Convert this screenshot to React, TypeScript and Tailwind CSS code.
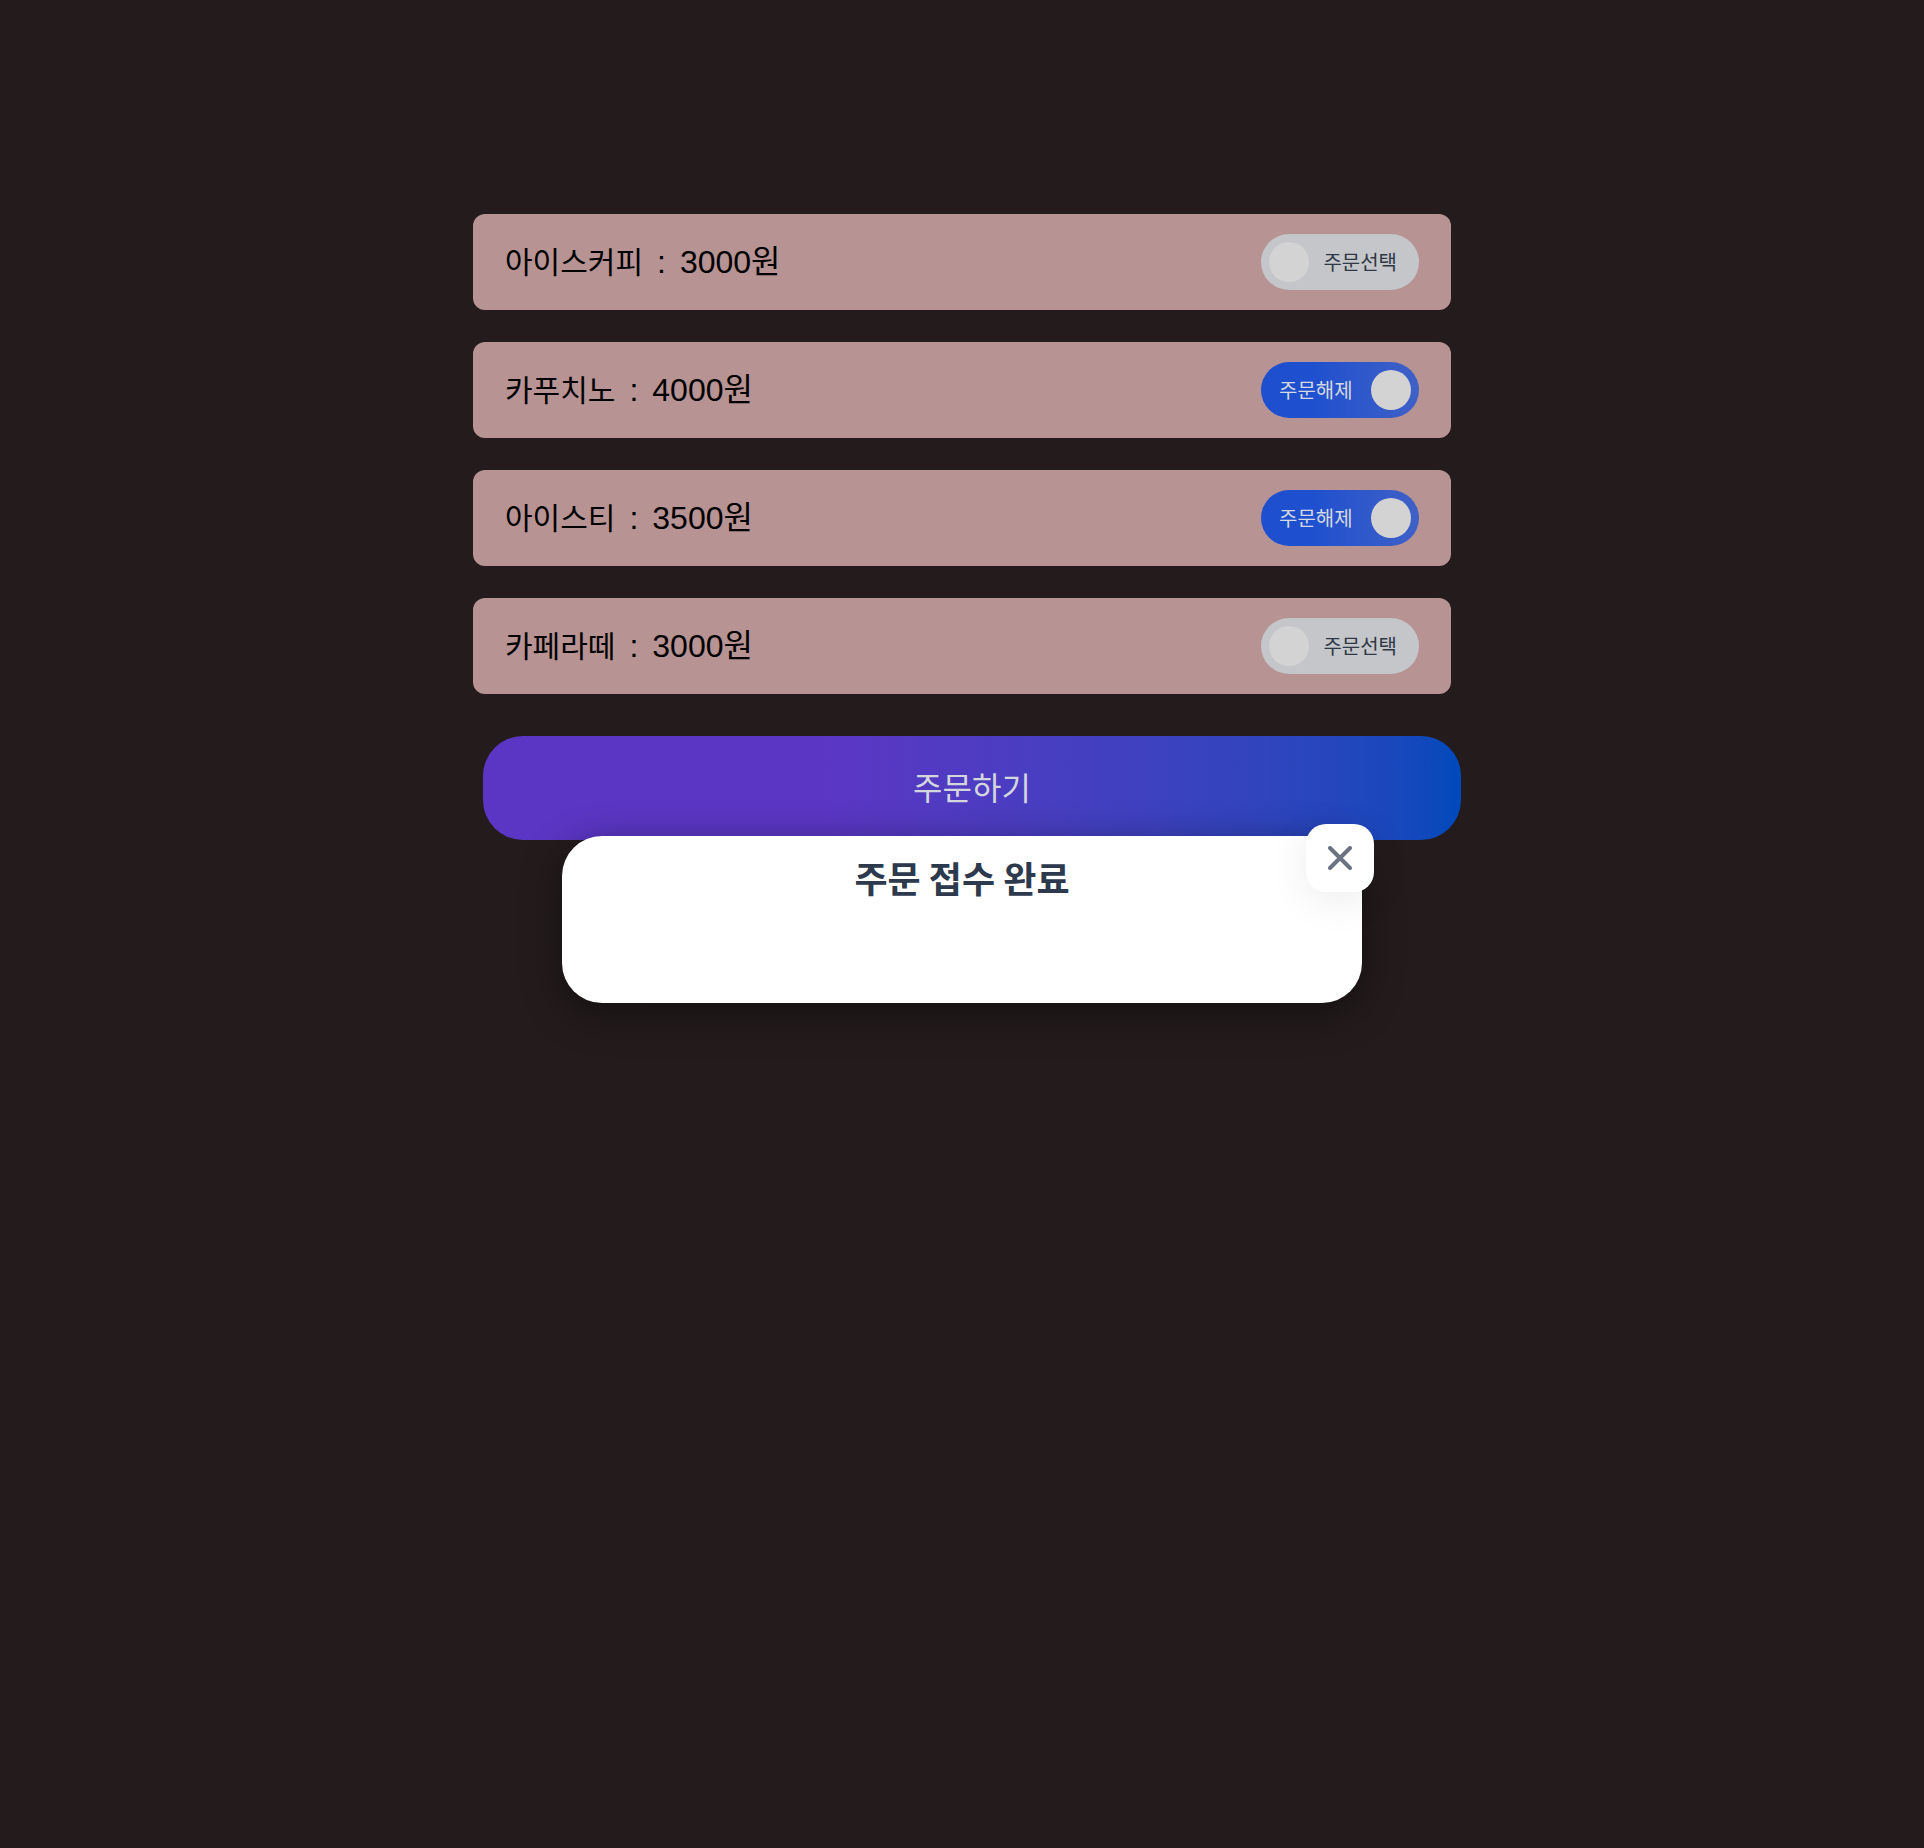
import { useState } from 'react';

const menu = [
  { name: '아이스커피', price: 3000, on: false },
  { name: '카푸치노', price: 4000, on: true },
  { name: '아이스티', price: 3500, on: true },
  { name: '카페라떼', price: 3000, on: false },
];

const font = "font-['Noto_Sans_CJK_KR','Noto_Sans',sans-serif]";
const latin = "font-['Liberation_Sans','Noto_Sans_CJK_KR',sans-serif]";

const Toggle = ({ on }: { on: boolean }) =>
  on ? (
    <div className="flex items-center justify-between w-[158px] h-[56px] rounded-full pl-[18px] pr-2 bg-linear-to-r from-[#1d4fcf] from-30% to-[#3f60c6]">
      <span className="text-[20px] text-[#d6d9e0]">주문해제</span>
      <span className="w-10 h-10 rounded-full bg-[#d3d3d3]" />
    </div>
  ) : (
    <div className="flex items-center justify-between w-[158px] h-[56px] rounded-full pl-2 pr-[22px] bg-[#c4c6c9]">
      <span className="w-10 h-10 rounded-full bg-[#d3d3d4]" />
      <span className="text-[20px] text-[#2f3845]">주문선택</span>
    </div>
  );

export default function App() {
  const [open, setOpen] = useState(true);

  return (
    <div className={`min-h-[1848px] bg-[#241c1c] pt-[214px] ${font}`}>
      <div className="w-[978px] mx-auto flex flex-col gap-8">
        {menu.map((m) => (
          <div
            key={m.name}
            className="flex items-center justify-between h-24 px-8 rounded-xl bg-[#b79394]"
          >
            <p className="flex items-baseline gap-3.5 text-black">
              <span className="text-[30px]">{m.name}</span>
              <span className={`${latin} text-[32px]`}>:</span>
              <span className={`${latin} text-[32px]`}>{m.price}원</span>
            </p>
            <Toggle on={m.on} />
          </div>
        ))}
      </div>

      <div className="w-[978px] mx-auto mt-[42px] flex flex-col items-center">
        <button className="ml-5 w-[978px] h-[104px] pb-1 rounded-[40px] bg-linear-to-r from-[#5b36c4] from-35% to-[#0049bb] text-[32px] text-[#d3d6dc]">
          주문하기
        </button>

        {open && (
          <div className="relative z-10 -mt-1 w-[800px] h-[167px] rounded-[40px] bg-white shadow-[0_10px_40px_rgba(0,0,0,0.45)]">
            <h2 className="pt-[14px] text-center text-[36px] font-bold text-[#2d3a4d]">
              주문 접수 완료
            </h2>
            <button
              onClick={() => setOpen(false)}
              className="absolute -top-3 -right-3 w-[68px] h-[68px] rounded-[20px] bg-white flex items-center justify-center shadow-[0_8px_40px_rgba(0,0,0,0.08)]"
            >
              <svg width="24" height="24" viewBox="0 0 24 24" fill="none">
                <path d="M2 2L22 22M22 2L2 22" stroke="#6b7280" strokeWidth="4" strokeLinecap="round" />
              </svg>
            </button>
          </div>
        )}
      </div>
    </div>
  );
}
